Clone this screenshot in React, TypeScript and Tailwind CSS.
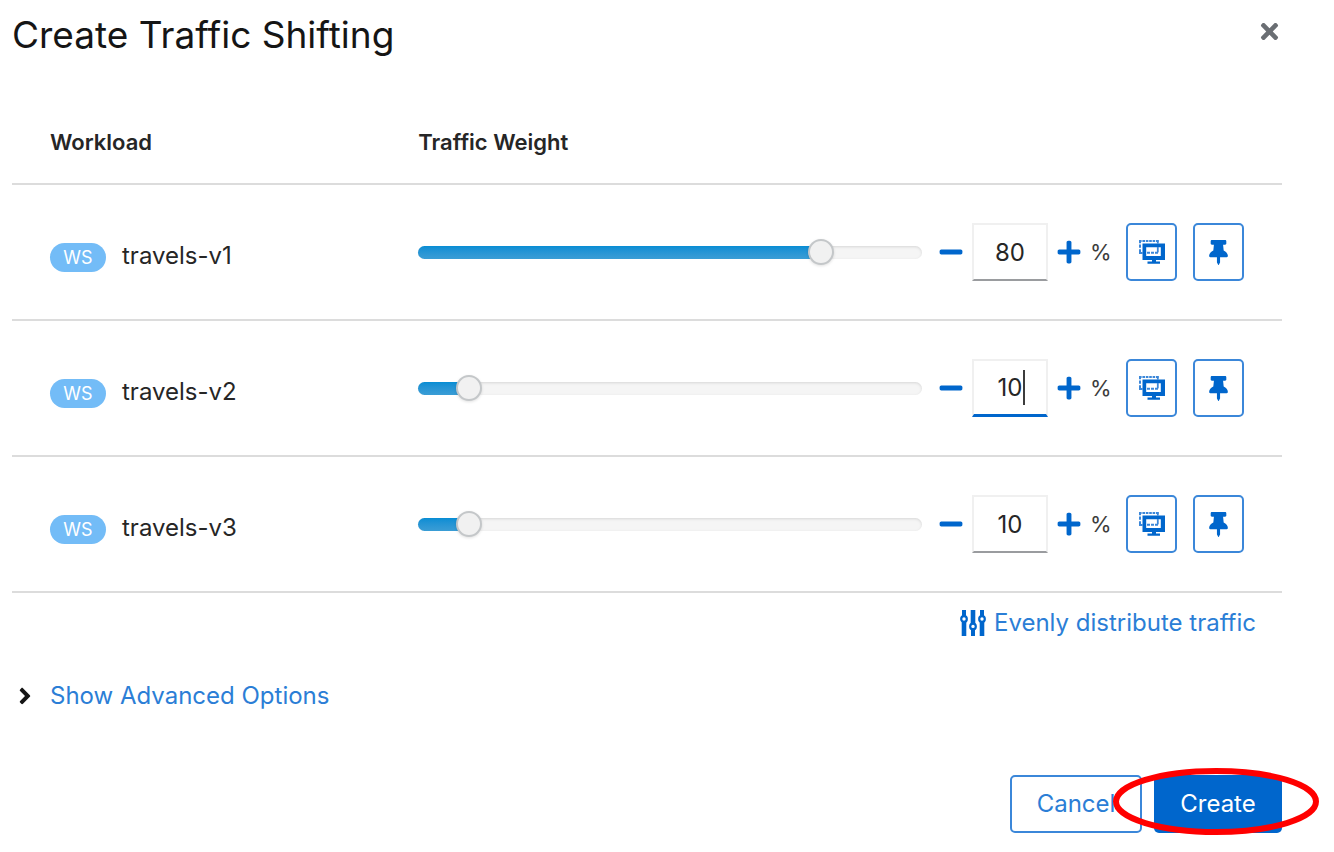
import { useState } from "react";
import { FaAngleRight, FaMinus, FaPlus, FaThumbtack, FaTimes } from "react-icons/fa";

type Workload = { name: string; weight: number; editing?: boolean };

const initialWorkloads: Workload[] = [
  { name: "travels-v1", weight: 80 },
  { name: "travels-v2", weight: 10, editing: true },
  { name: "travels-v3", weight: 10 },
];

const iconButton =
  "flex h-[58px] w-[51px] shrink-0 items-center justify-center rounded-[5px] border-2 border-[#3b87d9] bg-white text-[#0066cc]";

function MirrorIcon() {
  return (
    <svg width="26" height="24" viewBox="0 0 26 24" fill="none" aria-hidden="true">
      <path d="M0 1H19.6" stroke="#3b87d9" strokeWidth="2" strokeDasharray="2.6 0.8" />
      <path d="M1 0V14" stroke="#3b87d9" strokeWidth="2" strokeDasharray="3.2 1.4" />
      <path d="M0 13H3.5" stroke="#3b87d9" strokeWidth="2" />
      <path d="M18.8 0V3.5" stroke="#3b87d9" strokeWidth="1.8" />
      <path d="M3.5 3.5H26V20H3.5ZM7.2 7.3V16H21.8V7.3Z" fill="#0066cc" fillRule="evenodd" />
      <path d="M18.8 7V12.4" stroke="#3b87d9" strokeWidth="1.8" />
      <path d="M8 12.8H19.7" stroke="#3b87d9" strokeWidth="2" strokeDasharray="3 1" />
      <path d="M13 19.5H17V21.6H21V23.8H8.5V21.6H13Z" fill="#0066cc" />
    </svg>
  );
}

function EqualizerIcon() {
  return (
    <svg width="26" height="26" viewBox="0 0 26 26" aria-hidden="true">
      <g fill="#0066cc">
        <path d="M2 0H6V6H2ZM1.7 11H6.3V26H1.7Z" />
        <path d="M10.7 0H15.3V14H10.7ZM11 19H15V26H11Z" />
        <path d="M20 0H24V6H20ZM19.7 11H24.3V26H19.7Z" />
      </g>
      <g fill="#fff" stroke="#0066cc" strokeWidth="2.2">
        <circle cx="4" cy="9" r="2.8" />
        <circle cx="13" cy="16.4" r="2.8" />
        <circle cx="22" cy="9" r="2.8" />
      </g>
    </svg>
  );
}

function WeightSlider({ label, value, onChange }: { label: string; value: number; onChange: (v: number) => void }) {
  return (
    <div className="relative h-[13px] min-w-0 flex-1 rounded-full bg-[#f5f5f5] shadow-[inset_0_1px_3px_rgba(0,0,0,0.12)]">
      <div
        className="h-full rounded-l-full bg-gradient-to-b from-[#058dd4] to-[#3a9dd5]"
        style={{ width: `${value}%` }}
      />
      <input
        type="range"
        min={0}
        max={100}
        value={value}
        aria-label={label}
        onChange={(e) => onChange(Number(e.target.value))}
        className="absolute -top-[7px] -left-[13px] h-[26px] w-[calc(100%+26px)] appearance-none bg-transparent [&::-webkit-slider-thumb]:size-[26px] [&::-webkit-slider-thumb]:appearance-none [&::-webkit-slider-thumb]:rounded-full [&::-webkit-slider-thumb]:border-2 [&::-webkit-slider-thumb]:border-[#c4c7c9] [&::-webkit-slider-thumb]:bg-[#f1f1f1] [&::-webkit-slider-thumb]:shadow-[0_1px_3px_rgba(0,0,0,0.12)]"
      />
    </div>
  );
}

export default function App() {
  const [workloads, setWorkloads] = useState(initialWorkloads);

  const setWeight = (index: number, weight: number) =>
    setWorkloads((list) =>
      list.map((w, i) => (i === index ? { ...w, weight: Math.min(100, Math.max(0, weight)) } : w)),
    );

  return (
    <main className="overflow-x-clip bg-white pt-3 pr-[52px] pb-5 pl-3 font-['Inter','Liberation_Sans',sans-serif] text-2xl leading-8 text-[#262626]">
      <header className="flex items-start justify-between">
        <h1 className="text-[37px] leading-[46px] text-[#151515]">Create Traffic Shifting</h1>
        <button type="button" aria-label="Close" className="flex h-[38px] items-center text-[#6a6e73]">
          <FaTimes size={25} />
        </button>
      </header>

      <table className="mt-[43px] w-full table-fixed border-collapse">
        <thead>
          <tr className="h-[83px] border-b-2 border-[#dcdcdc] text-left text-[22px]">
            <th className="w-[29%] pl-[38px] font-semibold">Workload</th>
            <th className="pl-[38px] font-semibold">Traffic Weight</th>
          </tr>
        </thead>
        <tbody>
          {workloads.map((w, i) => (
            <tr key={w.name} className="h-[136px] border-b-2 border-[#dcdcdc]">
              <td className="pt-2 pl-[38px]">
                <div className="flex items-end gap-4">
                  <span className="flex h-[29px] w-14 items-center justify-center rounded-full bg-[#73bcf7] text-lg text-white">
                    WS
                  </span>
                  <span>{w.name}</span>
                </div>
              </td>
              <td className="px-[38px]">
                <div className="flex items-center">
                  <WeightSlider
                    label={`${w.name} traffic weight slider`}
                    value={w.weight}
                    onChange={(v) => setWeight(i, v)}
                  />
                  <button
                    type="button"
                    aria-label={`Decrease ${w.name}`}
                    onClick={() => setWeight(i, w.weight - 1)}
                    className="ml-4 shrink-0 text-[#0066cc]"
                  >
                    <FaMinus size={26} />
                  </button>
                  <div className="relative ml-2 shrink-0">
                    <input
                      type="text"
                      inputMode="numeric"
                      aria-label={`${w.name} traffic weight`}
                      value={w.weight}
                      onChange={(e) => setWeight(i, Number(e.target.value) || 0)}
                      className={`h-[58px] w-[76px] border-2 border-[#f0f0f0] bg-white text-center outline-none ${
                        w.editing ? "border-b-3 border-b-[#0066cc]" : "border-b-[#9a9c9f]"
                      }`}
                    />
                    {w.editing && <span className="absolute top-[11px] left-[51px] h-[35px] w-0.5 bg-[#3c3c3c]" />}
                  </div>
                  <button
                    type="button"
                    aria-label={`Increase ${w.name}`}
                    onClick={() => setWeight(i, w.weight + 1)}
                    className="ml-2 shrink-0 text-[#0066cc]"
                  >
                    <FaPlus size={26} />
                  </button>
                  <span className="ml-2 w-5 shrink-0 text-center text-[22px] text-[#3c3c3c]">%</span>
                  <button type="button" aria-label={`Mirror ${w.name}`} className={`ml-4 ${iconButton}`}>
                    <MirrorIcon />
                  </button>
                  <button type="button" aria-label={`Lock ${w.name}`} className={`ml-4 ${iconButton}`}>
                    <FaThumbtack size={25} />
                  </button>
                </div>
              </td>
            </tr>
          ))}
        </tbody>
      </table>

      <div className="mt-3.5 flex justify-end pr-[26px]">
        <button type="button" className="flex items-center gap-2 text-[#2b7ed6]">
          <EqualizerIcon />
          Evenly distribute traffic
        </button>
      </div>

      <button type="button" className="mt-[41px] flex items-center text-[#2b7ed6]">
        <span className="flex w-[38px] text-[#151515]">
          <FaAngleRight size={26} />
        </span>
        Show Advanced Options
      </button>

      <footer className="mt-[63px] flex justify-end gap-3">
        <button
          type="button"
          className="h-[58px] w-[132px] rounded-[5px] border-2 border-[#3b87d9] bg-white text-[#2b7ed6]"
        >
          Cancel
        </button>
        <div className="relative">
          <button type="button" className="h-[58px] w-32 rounded-[5px] bg-[#0066cc] text-white">
            Create
          </button>
          <svg
            className="pointer-events-none absolute -top-2 -left-[42px] max-w-none"
            width="208"
            height="70"
            viewBox="0 0 208 70"
            fill="none"
            aria-hidden="true"
          >
            <ellipse cx="104" cy="34.5" rx="100" ry="30.5" stroke="#ff0000" strokeWidth="6" />
          </svg>
        </div>
      </footer>
    </main>
  );
}
